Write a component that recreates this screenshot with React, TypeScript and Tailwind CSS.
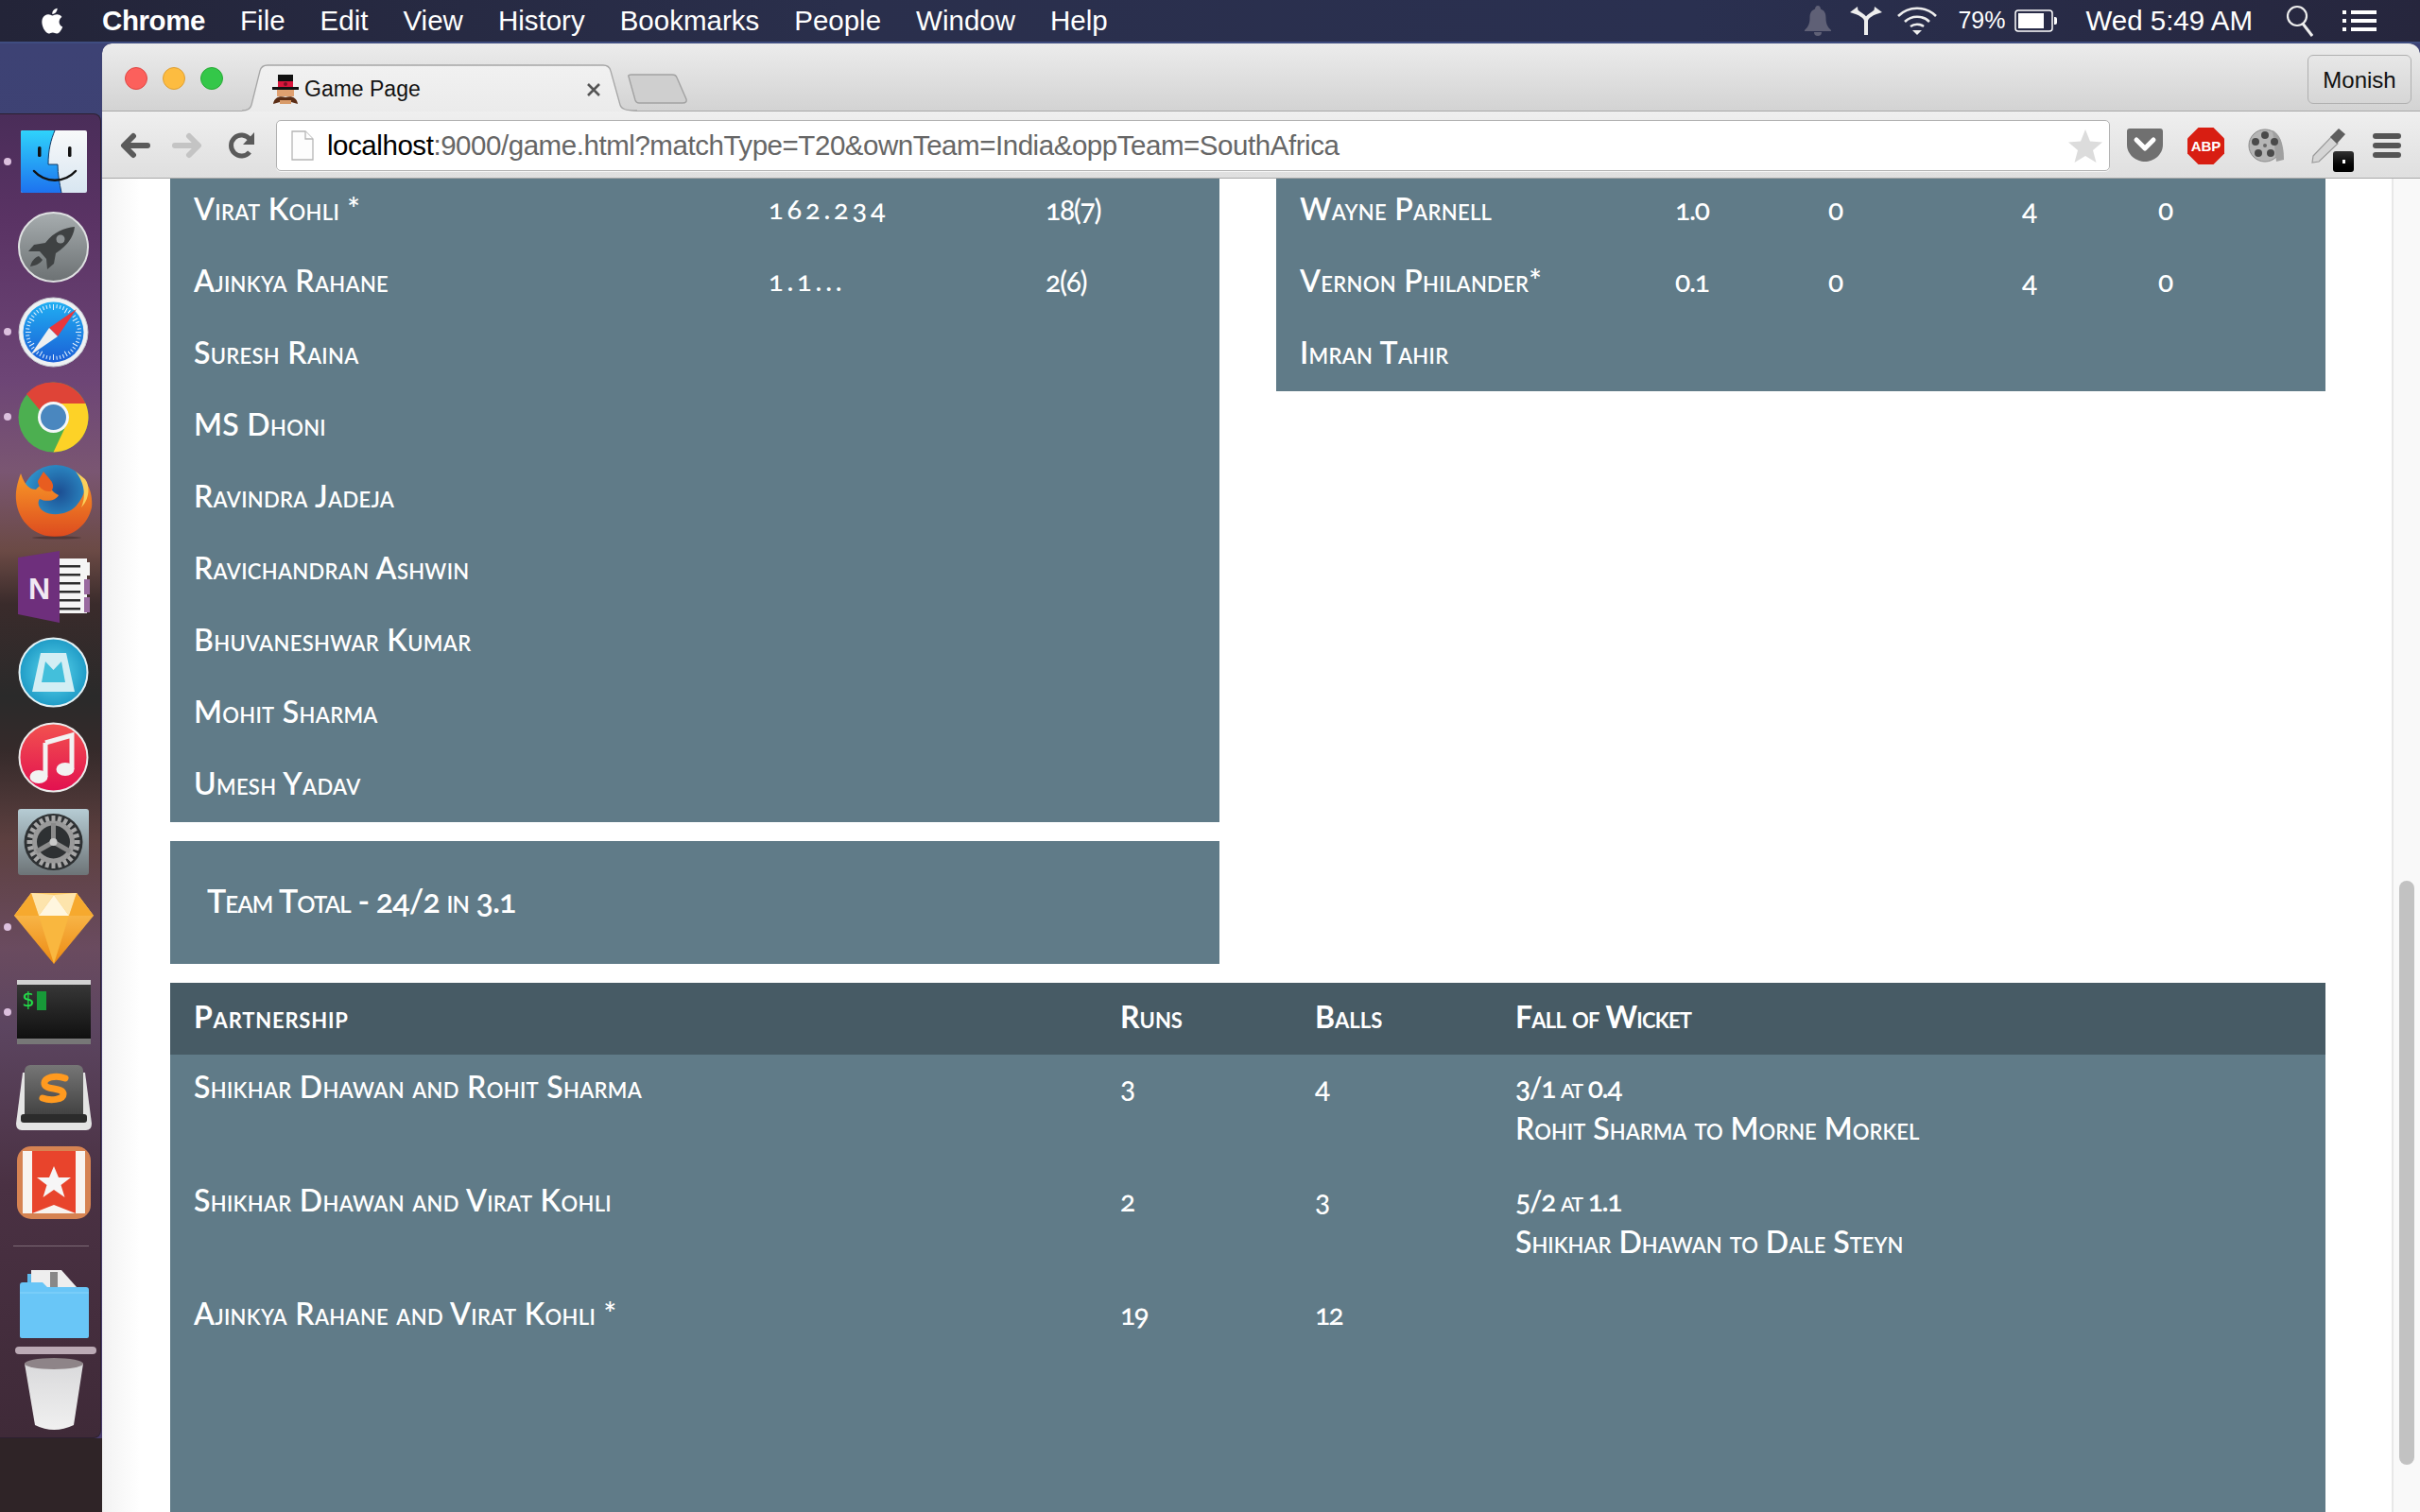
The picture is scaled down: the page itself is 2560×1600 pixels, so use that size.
import React from "react";

const Finder = () => (
  <svg width="70" height="66" viewBox="0 0 70 66">
    <defs>
      <linearGradient id="fa" x1="0" y1="0" x2="0" y2="1"><stop offset="0" stopColor="#2fd3fb" /><stop offset="1" stopColor="#1d72ef" /></linearGradient>
      <linearGradient id="fb" x1="0" y1="0" x2="0" y2="1"><stop offset="0" stopColor="#f8f9fa" /><stop offset="1" stopColor="#d8e6f1" /></linearGradient>
    </defs>
    <rect width="70" height="66" rx="2" fill="url(#fb)" />
    <path d="M2 0H36C32 10 29 20 29 36H39C39 46 41 56 43 66H2A2 2 0 0 1 0 64V2A2 2 0 0 1 2 0Z" fill="url(#fa)" />
    <path d="M36 0C32 10 29 20 29 36H39C39 46 41 56 43 66" fill="none" stroke="#123a66" strokeWidth="1" />
    <rect x="18" y="17" width="3.5" height="11" rx="1.5" fill="#111" />
    <rect x="50" y="17" width="3.5" height="11" rx="1.5" fill="#111" />
    <path d="M14 43C26 56 46 56 58 43" fill="none" stroke="#111" strokeWidth="2.5" strokeLinecap="round" />
  </svg>
);

const Launchpad = () => (
  <svg width="75" height="75" viewBox="0 0 75 75">
    <defs>
      <linearGradient id="la" x1="0" y1="0" x2="0" y2="1"><stop offset="0" stopColor="#a7adaf" /><stop offset="1" stopColor="#6c7173" /></linearGradient>
    </defs>
    <circle cx="37.5" cy="37.5" r="36.5" fill="url(#la)" stroke="#dfe1e2" strokeWidth="2" />
    <path d="M60 16C49 17 37 22 29 33L17 35 11 42 23 42 30 50 31 61 38 55 40 44C52 36 59 27 60 16Z" fill="#3f4243" />
    <path d="M22 47C17 49 14 53 13 58 19 57 23 55 26 51Z" fill="#3f4243" />
    <circle cx="45" cy="29" r="4.5" fill="#8d9294" />
  </svg>
);

const Safari = () => {
  const ticks = Array.from({ length: 48 }, (_, i) => i * 7.5);
  return (
    <svg width="75" height="75" viewBox="0 0 75 75">
      <defs>
        <linearGradient id="sa" x1="0" y1="0" x2="0" y2="1"><stop offset="0" stopColor="#20aef2" /><stop offset="1" stopColor="#1b5fd6" /></linearGradient>
      </defs>
      <circle cx="37.5" cy="37.5" r="36.5" fill="#eef1f3" stroke="#c5cad0" strokeWidth="1" />
      <circle cx="37.5" cy="37.5" r="32" fill="url(#sa)" />
      {ticks.map((a) => (
        <line key={a} x1="37.5" y1="8" x2="37.5" y2={a % 30 === 0 ? "14" : "12"} stroke="#e5f2fd" strokeWidth="1" transform={`rotate(${a} 37.5 37.5)`} />
      ))}
      <path d="M62 13L33 33 42 42Z" fill="#e8373c" />
      <path d="M13 62L33 33 42 42Z" fill="#eef0f1" />
    </svg>
  );
};

const Chrome = () => (
  <svg width="75" height="75" viewBox="0 0 75 75">
    <circle cx="37.5" cy="37.5" r="37" fill="#4caf50" />
    <path d="M37.5 .5A37 37 0 0 1 71.5 23H37.5A15 15 0 0 0 24 31L9 13A37 37 0 0 1 37.5 .5Z" fill="#df4437" />
    <path d="M71.5 23A37 37 0 0 1 37.5 74.5L51 46A15 15 0 0 0 37.5 23Z" fill="#fdd227" />
    <circle cx="37.5" cy="37.5" r="16.5" fill="#f4f7f9" />
    <circle cx="37.5" cy="37.5" r="13.5" fill="#4a87bf" />
  </svg>
);

const Firefox = () => (
  <svg width="82" height="80" viewBox="0 0 82 80">
    <defs>
      <radialGradient id="ffa" cx="55%" cy="40%" r="55%"><stop offset="0" stopColor="#1c4e92" /><stop offset="1" stopColor="#2f9ad2" /></radialGradient>
      <linearGradient id="ffb" x1="0" y1="0" x2="0" y2="1"><stop offset="0" stopColor="#f99a27" /><stop offset="1" stopColor="#dd4b1f" /></linearGradient>
    </defs>
    <circle cx="43" cy="37" r="36" fill="url(#ffa)" />
    <path d="M6 10C3 18 0 28 1 38 3 62 22 77 42 77 62 77 77 64 81 46 82 36 80 26 74 18 75 30 70 38 64 45 56 53 40 56 30 50 25 47 23 41 26 37 34 41 44 38 46 33 40 30 36 26 38 20 32 20 26 22 22 27 15 27 10 22 6 10Z" fill="url(#ffb)" />
    <path d="M64 8C72 18 76 32 70 46 78 38 80 24 74 16Z" fill="#fbd05a" />
    <path d="M30 8C36 16 44 21 38 29 30 30 24 24 24 18Z" fill="#e85d20" />
    <ellipse cx="44" cy="78" rx="26" ry="1.5" fill="#000" opacity=".25" />
  </svg>
);

const OneNote = () => (
  <svg width="76" height="76" viewBox="0 0 76 76">
    <rect x="40" y="8" width="33" height="58" fill="#f5f5f5" />
    <rect x="70" y="12" width="6" height="14" fill="#f5f5f5" />
    <rect x="70" y="30" width="6" height="16" fill="#9a6aa0" />
    <rect x="70" y="49" width="6" height="16" fill="#9a6aa0" />
    {[15, 24, 33, 42, 51, 60].map((y) => (
      <rect key={y} x="44" y={y} width="22" height="2.5" fill="#2d2d2d" />
    ))}
    <path d="M0 7L44 0V76L0 67Z" fill="#6e2f7c" />
    <text x="11" y="51" fontFamily="'Liberation Sans', sans-serif" fontWeight="700" fontSize="32" fill="#f1e8f3">N</text>
  </svg>
);

const Mailbox = () => (
  <svg width="75" height="75" viewBox="0 0 75 75">
    <defs>
      <radialGradient id="ma"><stop offset="0" stopColor="#5fd9ef" /><stop offset="1" stopColor="#1f9bc6" /></radialGradient>
    </defs>
    <circle cx="37.5" cy="37.5" r="36" fill="url(#ma)" stroke="#e4f2f6" strokeWidth="2" />
    <path d="M24 17H51L60 58H15Z" fill="#d3eef4" />
    <path d="M29 26L37.5 35 46 26 50 48H25Z" fill="#43bfdb" />
  </svg>
);

const Music = () => (
  <svg width="75" height="75" viewBox="0 0 75 75">
    <defs>
      <linearGradient id="ia" x1="0" y1="0" x2="0" y2="1"><stop offset="0" stopColor="#f2524f" /><stop offset="1" stopColor="#e21050" /></linearGradient>
    </defs>
    <circle cx="37.5" cy="37.5" r="36" fill="url(#ia)" stroke="#ececec" strokeWidth="2" />
    <path d="M29 22L57 14V50" fill="none" stroke="#f2f2f2" strokeWidth="5" />
    <path d="M29 22V58" fill="none" stroke="#f2f2f2" strokeWidth="5" />
    <ellipse cx="22" cy="58" rx="9.5" ry="7" fill="#f2f2f2" />
    <ellipse cx="50" cy="50" rx="9.5" ry="7" fill="#f2f2f2" />
  </svg>
);

const SysPrefs = () => {
  const teeth = Array.from({ length: 24 }, (_, i) => i * 15);
  return (
    <svg width="75" height="70" viewBox="0 0 75 70">
      <defs>
        <linearGradient id="pa" x1="0" y1="0" x2="0" y2="1"><stop offset="0" stopColor="#b6ccd4" /><stop offset="1" stopColor="#6d7477" /></linearGradient>
      </defs>
      <rect width="75" height="70" rx="3" fill="url(#pa)" />
      <ellipse cx="37.5" cy="35" rx="31" ry="30" fill="#2e3133" />
      {teeth.map((a) => (
        <rect key={a} x="35.5" y="7" width="4" height="6" fill="#a8a8a8" transform={`rotate(${a} 37.5 35)`} />
      ))}
      <circle cx="37.5" cy="35" r="20" fill="none" stroke="#9a9a9a" strokeWidth="5" />
      <path d="M37.5 35V15M37.5 35L20 45M37.5 35L55 45" stroke="#8b8b8b" strokeWidth="5" />
      <circle cx="37.5" cy="35" r="4" fill="#c9c9c9" />
    </svg>
  );
};

const Sketch = () => (
  <svg width="84" height="77" viewBox="0 0 84 77">
    <defs>
      <linearGradient id="ka" x1="0" y1="0" x2="0" y2="1"><stop offset="0" stopColor="#fdc85f" /><stop offset="1" stopColor="#ec8a12" /></linearGradient>
    </defs>
    <path d="M18 2H66L84 26 42 77 0 26Z" fill="url(#ka)" />
    <path d="M18 2H66L84 26H0Z" fill="#fbc868" />
    <path d="M26 26L42 4 58 26Z" fill="#fff6df" />
    <path d="M18 2L42 4 26 26ZM66 2L42 4 58 26Z" fill="#fde4ac" />
    <path d="M0 26L18 2 26 26ZM84 26L66 2 58 26Z" fill="#f6a92e" />
    <path d="M26 26H58L42 77Z" fill="#f9b73f" />
  </svg>
);

const Terminal = () => (
  <svg width="78" height="68" viewBox="0 0 78 68">
    <defs>
      <linearGradient id="ta" x1="0" y1="0" x2="0" y2="1"><stop offset="0" stopColor="#3a3a3a" /><stop offset="1" stopColor="#0c0c0c" /></linearGradient>
    </defs>
    <rect width="78" height="68" fill="url(#ta)" />
    <rect width="78" height="5" fill="#d2d2d2" />
    <rect y="62" width="78" height="6" fill="#777" />
    <text x="5" y="28" fontFamily="'DejaVu Sans Mono', monospace" fontSize="22" fill="#22e04a">$</text>
    <rect x="21" y="12" width="10" height="20" fill="#179a38" />
  </svg>
);

const Sublime = () => (
  <svg width="80" height="69" viewBox="0 0 80 69">
    <defs>
      <linearGradient id="ua" x1="0" y1="0" x2="0" y2="1"><stop offset="0" stopColor="#767676" /><stop offset="1" stopColor="#3a3a3a" /></linearGradient>
    </defs>
    <path d="M7 8L0 62Q0 69 6 69H74Q80 69 80 62L73 8Z" fill="#e4e4e4" />
    <rect x="9" y="0" width="62" height="61" rx="6" fill="url(#ua)" />
    <rect x="5" y="52" width="70" height="9" rx="3" fill="#2b2b2b" />
    <path d="M52 14C42 10 29 13 30 20 31 27 50 23 50 31 50 37 36 38 28 35" fill="none" stroke="#ff9a1f" strokeWidth="7" strokeLinecap="round" />
  </svg>
);

const Wunderlist = () => (
  <svg width="78" height="77" viewBox="0 0 78 77">
    <rect width="78" height="77" rx="15" fill="#d68352" />
    <rect x="6" y="5" width="66" height="66" fill="#f8f4f0" />
    <path d="M16 5H62V71L39 62 16 71Z" fill="#e8442c" />
    <path d="M39 21L44 33H57L46.5 41 50.5 54 39 46 27.5 54 31.5 41 21 33H34Z" fill="#f6f6f6" />
  </svg>
);

const Folder = () => (
  <svg width="73" height="72" viewBox="0 0 73 72">
    <path d="M12 0H44L60 18H12Z" fill="#eeeeee" />
    <rect x="32" y="2" width="8" height="18" fill="#888" />
    <path d="M8 4H12V13H8Z" fill="#5cb8ea" />
    <path d="M0 16Q0 13 3 13H24L29 18H70Q73 18 73 21V70Q73 72 71 72H2Q0 72 0 70Z" fill="#69c6f7" />
    <path d="M0 24H73" stroke="#8ad5fb" strokeWidth="1" />
  </svg>
);

const Trash = () => (
  <svg width="62" height="78" viewBox="0 0 62 78">
    <defs>
      <linearGradient id="ra" x1="0" y1="0" x2="0" y2="1"><stop offset="0" stopColor="#d8d8da" /><stop offset="1" stopColor="#f0f0f0" /></linearGradient>
    </defs>
    <path d="M0 7C10 1 52 1 62 7L52 72Q31 82 11 72Z" fill="url(#ra)" />
    <ellipse cx="31" cy="7" rx="31" ry="6" fill="#8e8488" />
  </svg>
);

const Dot = () => <span className="absolute left-[4px] top-1/2 -translate-y-1/2 w-[8px] h-[8px] rounded-full bg-[#dcc0de]" />;

const dockIcons: [React.ReactNode, boolean][] = [
  [<Finder />, true],
  [<Launchpad />, false],
  [<Safari />, true],
  [<Chrome />, true],
  [<Firefox />, false],
  [<OneNote />, false],
  [<Mailbox />, false],
  [<Music />, false],
  [<SysPrefs />, false],
  [<Sketch />, true],
  [<Terminal />, true],
  [<Sublime />, false],
  [<Wunderlist />, false],
];

const Dock = () => (
  <div className="w-[108px] h-full flex flex-col bg-gradient-to-b from-[#3d4274] to-[#4a3c6c]">
    <div className="h-[74px] shrink-0" />
    <div className="w-[107px] h-[1402px] shrink-0 rounded-tr-[8px] rounded-br-[8px] border-r border-t border-b border-[#2c2030] flex flex-col items-stretch pt-[5px] bg-[linear-gradient(180deg,#4a2d59_0%,#5a3364_8%,#6d4576_20%,#7a5672_27%,#6b4a45_33%,#3a2b2b_37%,#2a2a2a_44%,#352a2a_48%,#5d4040_55%,#6a4b5f_63%,#5c4560_69%,#4a3143_81%,#3f2a38_100%)]">
      {dockIcons.map(([icon, running], i) => (
        <div key={i} className="relative h-[90px] shrink-0 flex items-center justify-center pl-[7px]">
          {running && <Dot />}
          {icon}
        </div>
      ))}
      <div className="mt-[22px] ml-[14px] w-[80px] h-px bg-[#7d6a76]" />
      <div className="mt-[25px] ml-[21px] h-[72px]">
        <Folder />
      </div>
      <div className="mt-[9px] ml-[16px] w-[86px] h-[8px] rounded-full bg-[#bbaab5]" />
      <div className="mt-[3px] ml-[26px] h-[78px]">
        <Trash />
      </div>
    </div>
    <div className="flex-1 bg-[#2f2427]" />
  </div>
);

const Apple = () => (
  <svg width="26" height="32" viewBox="0 0 26 32" fill="#fff">
    <path d="M21.6 17C21.6 13.6 24.4 12 24.5 11.9 22.9 9.6 20.5 9.3 19.6 9.2 17.5 9 15.6 10.4 14.5 10.4 13.4 10.4 11.7 9.2 10 9.3 7.7 9.3 5.6 10.6 4.5 12.6 2.1 16.7 3.9 22.8 6.2 26.1 7.3 27.7 8.7 29.5 10.4 29.5 12.1 29.4 12.7 28.4 14.8 28.4 16.8 28.4 17.4 29.5 19.2 29.4 21 29.4 22.2 27.8 23.3 26.2 24.6 24.3 25.2 22.5 25.2 22.4 25.1 22.4 21.6 21 21.6 17Z" />
    <path d="M18.2 7C19.1 5.9 19.8 4.3 19.6 2.8 18.2 2.9 16.6 3.7 15.7 4.8 14.8 5.8 14.1 7.4 14.3 8.9 15.8 9 17.3 8.1 18.2 7Z" />
  </svg>
);

const MenuBar = () => (
  <div className="h-[46px] shrink-0 flex items-center text-white font-['Liberation_Sans',Arial,sans-serif] text-[29.5px] bg-[linear-gradient(90deg,#232438_0%,#2a2f4c_35%,#2a3050_70%,#26263d_100%)] border-b-2 border-[#3f4d80]">
    <div className="ml-[41px] w-[67px]">
      <Apple />
    </div>
    <div className="flex items-center gap-[37px]">
      <span className="font-bold tracking-[-0.4px]">Chrome</span>
      <span>File</span>
      <span>Edit</span>
      <span>View</span>
      <span>History</span>
      <span>Bookmarks</span>
      <span>People</span>
      <span>Window</span>
      <span>Help</span>
    </div>
    <div className="ml-auto flex items-center">
      <svg width="28" height="32" viewBox="0 0 28 32" fill="#5f6076">
        <path d="M14 0C16 0 17 2 17 3.5 21 5 22.5 8 22.5 13 22.5 20 25 23 28 26V27H0V26C3 23 5.5 20 5.5 13 5.5 8 7 5 11 3.5 11 2 12 0 14 0Z" />
        <path d="M10 28H18A4 4 0 0 1 10 28Z" />
      </svg>
      <svg className="ml-[20px]" width="34" height="30" viewBox="0 0 34 30" fill="none" stroke="#eee" strokeWidth="4">
        <path d="M17 30V15C17 10 11 9 7 5M17 15C17 10 23 9 27 5" />
        <path d="M0 6L8 0 9 9ZM34 6L26 0 25 9Z" fill="#eee" stroke="none" />
      </svg>
      <svg className="ml-[16px]" width="42" height="30" viewBox="0 0 42 30" fill="none" stroke="#eee" strokeWidth="2.6">
        <path d="M1 10C12 -1 30 -1 41 10M8 16C15 9 27 9 34 16M14 21C18 18 24 18 28 21" />
        <path d="M21 30L16 25H26Z" fill="#eee" stroke="none" />
      </svg>
      <span className="ml-[22px] text-[25px]">79%</span>
      <svg className="ml-[10px]" width="46" height="24" viewBox="0 0 46 24">
        <rect x="1" y="1" width="39" height="22" rx="3" fill="none" stroke="#fff" strokeWidth="1.5" />
        <rect x="4" y="4" width="27" height="16" fill="#fff" />
        <path d="M42 8H43Q45 8 45 10V14Q45 16 43 16H42Z" fill="#fff" />
      </svg>
      <span className="ml-[29px]">Wed 5:49 AM</span>
      <svg className="ml-[35px]" width="29" height="34" viewBox="0 0 29 34" fill="none" stroke="#eee" strokeWidth="2.2">
        <circle cx="12" cy="12" r="10" />
        <path d="M18 20L28 33" strokeWidth="3" />
      </svg>
      <svg className="ml-[31px] mr-[46px]" width="36" height="22" viewBox="0 0 36 22" fill="#fff">
        <rect width="4" height="4" />
        <rect x="9" width="27" height="4" />
        <rect y="9" width="4" height="4" />
        <rect x="9" y="9" width="27" height="4" />
        <rect y="18" width="4" height="4" />
        <rect x="9" y="18" width="27" height="4" />
      </svg>
    </div>
  </div>
);

const Light = ({ c, b }: { c: string; b: string }) => (
  <span className="w-[24px] h-[24px] rounded-full border" style={{ backgroundColor: c, borderColor: b }} />
);

const Favicon = () => (
  <svg width="28" height="32" viewBox="0 0 28 32">
    <path d="M6 1H22V13H6Z" fill="#111" />
    <rect x="6" y="8" width="16" height="6" fill="#d8153b" />
    <circle cx="14" cy="11" r="2" fill="#7a0e22" />
    <rect x="0" y="14" width="28" height="3" fill="#111" />
    <rect x="5" y="17" width="18" height="7" fill="#e0a070" />
    <path d="M1 32C2 25 8 23 14 25 20 23 26 25 27 32L20 30 14 28 8 30Z" fill="#5a2c14" />
    <rect x="8" y="28" width="12" height="4" fill="#d89a68" />
  </svg>
);

const TabBar = () => (
  <div className="h-[72px] shrink-0 flex bg-gradient-to-b from-[#ececec] to-[#d3d3d3] border-b border-[#a9a9a9] rounded-tr-[12px] rounded-tl-[10px]">
    <div className="w-[148px] flex items-center gap-[16px] pl-[24px] pt-[3px]">
      <Light c="#fc605c" b="#df4744" />
      <Light c="#fdbc40" b="#de9f34" />
      <Light c="#34c749" b="#27aa35" />
    </div>
    <div className="relative w-[418px] h-[50px] mt-[22px] shrink-0 flex items-center pl-[32px] pt-[2px]">
      <svg className="absolute inset-0" width="418" height="50" viewBox="0 0 418 50" fill="none">
        <defs>
          <linearGradient id="tabg" x1="0" y1="0" x2="0" y2="1">
            <stop offset="0" stopColor="#f1f1f1" />
            <stop offset="1" stopColor="#ebebeb" />
          </linearGradient>
        </defs>
        <path d="M0 49C6 49 9 47 10 43L19 7C20 3 23 1 27 1H382C386 1 389 3 390 7L400 43C401 47 405 49 418 50H0Z" fill="url(#tabg)" />
        <path d="M0 49C6 49 9 47 10 43L19 7C20 3 23 1 27 1H382C386 1 389 3 390 7L400 43C401 47 405 49 418 49" stroke="#a6a6a6" strokeWidth="1.3" />
      </svg>
      <span className="relative flex items-center font-['Liberation_Sans',Arial,sans-serif] text-[23px] text-[#111]">
        <Favicon />
        <span className="ml-[6px]">Game Page</span>
      </span>
      <svg className="absolute left-[365px] top-[20px]" width="14" height="14" viewBox="0 0 14 14" stroke="#555" strokeWidth="2.6">
        <path d="M1 1L13 13M13 1L1 13" />
      </svg>
    </div>
    <div className="mt-[32px] ml-[-10px] w-[64px] h-[32px] shrink-0">
      <svg width="64" height="32" viewBox="0 0 64 32">
        <path d="M1 3Q0 1 4 1H47Q51 1 52 4L62 27Q63 31 58 31H12Q9 31 8 28Z" fill="#cfcfcf" stroke="#a2a2a2" strokeWidth="1.4" />
      </svg>
    </div>
    <div className="ml-auto mr-[9px] mt-[12px] w-[110px] h-[52px] rounded-[6px] border border-[#b0b0b0] flex items-center justify-center pt-[2px] font-['Liberation_Sans',Arial,sans-serif] text-[24px] text-[#111]">
      Monish
    </div>
  </div>
);

const Toolbar = () => (
  <div className="h-[71px] shrink-0 flex items-center pt-[2px] bg-gradient-to-b from-[#efefef] to-[#dfdfdf] border-b border-[#a8a8a8]">
    <svg className="ml-[19px]" width="32" height="28" viewBox="0 0 32 28" fill="none" stroke="#5a5a5a" strokeWidth="6" strokeLinecap="round" strokeLinejoin="round">
      <path d="M29 14H5M14 4L4 14 14 24" />
    </svg>
    <svg className="ml-[23px]" width="32" height="28" viewBox="0 0 32 28" fill="none" stroke="#c4c4c4" strokeWidth="6" strokeLinecap="round" strokeLinejoin="round">
      <path d="M3 14H27M18 4L28 14 18 24" />
    </svg>
    <svg className="ml-[27px]" width="30" height="30" viewBox="0 0 30 30" fill="none" stroke="#5a5a5a" strokeWidth="5">
      <path d="M23 22A11 11 0 1 1 23 8" />
      <path d="M28 1V14H16Z" fill="#5a5a5a" stroke="none" />
    </svg>
    <div className="ml-[21px] w-[1940px] h-[54px] rounded-[5px] border border-[#b2b2b2] bg-white flex items-center pl-[15px] shadow-[0_1px_0_#f5f5f5]">
      <svg width="24" height="32" viewBox="0 0 24 32" fill="#fdfdfd" stroke="#b5b5b5" strokeWidth="1.3">
        <path d="M1 1H15L23 9V31H1Z" />
        <path d="M15 1V9H23" />
      </svg>
      <span className="ml-[14px] font-['Liberation_Sans',Arial,sans-serif] text-[29.5px] tracking-[-0.45px] text-[#666]">
        <span className="text-black">localhost</span>:9000/game.html?matchType=T20&amp;ownTeam=India&amp;oppTeam=SouthAfrica
      </span>
      <svg className="ml-auto mr-[7px]" width="36" height="35" viewBox="0 0 36 35" fill="#dcdcdc">
        <path d="M18 0L23 12.5 36 13.5 26 22 29.5 35 18 28 6.5 35 10 22 0 13.5 13 12.5Z" />
      </svg>
    </div>
    <svg className="ml-[18px]" width="38" height="36" viewBox="0 0 38 36">
      <path d="M0 3Q0 0 3 0H35Q38 0 38 3V17C38 28 28 35 19 35 10 35 0 28 0 17Z" fill="#707070" />
      <path d="M10 12L19 21 28 12" fill="none" stroke="#fff" strokeWidth="5" strokeLinecap="round" strokeLinejoin="round" />
    </svg>
    <svg className="ml-[26px]" width="39" height="39" viewBox="0 0 39 39">
      <path d="M11.5 0H27.5L39 11.5V27.5L27.5 39H11.5L0 27.5V11.5Z" fill="#d81e12" />
      <text x="19.5" y="25" textAnchor="middle" fontFamily="'Liberation Sans Narrow', 'Liberation Sans', sans-serif" fontWeight="700" fontSize="15" fill="#fff">ABP</text>
    </svg>
    <svg className="ml-[25px]" width="38" height="38" viewBox="0 0 38 38">
      <circle cx="18" cy="19" r="17" fill="#b5b5b5" stroke="#8a8a8a" />
      <path d="M26 3C32 6 38 14 38 34L30 36Z" fill="#a0a0a0" />
      {[[18, 8], [8, 15], [11, 27], [24, 27], [28, 15]].map(([x, y]) => (
        <circle key={x} cx={x} cy={y} r="4" fill="#4a4a4a" />
      ))}
      <circle cx="18" cy="19" r="2" fill="#666" />
    </svg>
    <div className="relative ml-[28px] w-[38px] h-[38px]">
      <svg width="38" height="38" viewBox="0 0 38 38">
        <path d="M3 30L22 10 29 17 9 36 2 37Z" fill="#d5d5d5" stroke="#9a9a9a" strokeWidth="1.2" />
        <path d="M21 10L30 1 37 7 28 17Z" fill="#5e5e5e" />
      </svg>
      <span className="absolute left-[24px] top-[25px] w-[22px] h-[22px] rounded-[3px] bg-gradient-to-b from-[#333] to-black flex items-center justify-center">
        <span className="w-[3px] h-[4px] bg-white" />
      </span>
    </div>
    <div className="ml-[28px] w-[30px] flex flex-col gap-[4px]">
      <span className="h-[6px] rounded-[3px] bg-[#555]" />
      <span className="h-[6px] rounded-[3px] bg-[#555]" />
      <span className="h-[6px] rounded-[3px] bg-[#555]" />
    </div>
  </div>
);

const Batting = [
  ["Virat Kohli *", "162.234", "18(7)"],
  ["Ajinkya Rahane", "1.1...", "2(6)"],
  ["Suresh Raina", "", ""],
  ["MS Dhoni", "", ""],
  ["Ravindra Jadeja", "", ""],
  ["Ravichandran Ashwin", "", ""],
  ["Bhuvaneshwar Kumar", "", ""],
  ["Mohit Sharma", "", ""],
  ["Umesh Yadav", "", ""],
];

const Bowling = [
  ["Wayne Parnell", "1.0", "0", "4", "0"],
  ["Vernon Philander*", "0.1", "0", "4", "0"],
  ["Imran Tahir", "", "", "", ""],
];

const Partners = [
  ["Shikhar Dhawan and Rohit Sharma", "3", "4", "3/1 at 0.4", "Rohit Sharma to Morne Morkel"],
  ["Shikhar Dhawan and Virat Kohli", "2", "3", "5/2 at 1.1", "Shikhar Dhawan to Dale Steyn"],
  ["Ajinkya Rahane and Virat Kohli *", "19", "12", "", ""],
];

const Content = () => (
  <div className="relative flex-1 min-h-0 overflow-hidden bg-[linear-gradient(90deg,#f2f2f2,#ffffff_40px)] font-['Lato',sans-serif] font-semibold text-[32px] [font-variant-caps:small-caps] [font-variant-numeric:oldstyle-nums] tracking-[0.3px] text-white">
    <div className="w-[2530px] -mt-[3px] pl-[72px]">
      <div className="flex gap-[60px] w-[2280px] items-start">
        <div className="w-[1110px] shrink-0">
          <div className="bg-[#607b88]">
            {Batting.map(([n, sr, r]) => (
              <div key={n} className="h-[76px] pl-[25px] pb-[6px] grid grid-cols-[608px_293px_1fr] items-center">
                <span>{n}</span>
                <span className="tracking-[3.8px] text-[29px] font-medium">{sr}</span>
                <span className="text-[30px] tracking-[-1.3px] font-medium">{r}</span>
              </div>
            ))}
          </div>
          <div className="mt-[20px] h-[130px] bg-[#607b88] flex items-center pl-[39px] pb-[5px] text-[34px] tracking-[-0.9px]">
            Team Total - 24/2 in 3.1
          </div>
        </div>
        <div className="w-[1110px] shrink-0 bg-[#607b88]">
          {Bowling.map(([n, o, m, r, w]) => (
            <div key={n} className="h-[76px] pl-[25px] pb-[6px] grid grid-cols-[397px_162px_205px_144px_1fr] items-center">
              <span>{n}</span>
              <span className="text-[30px] tracking-[-1.3px] font-medium">{o}</span>
              <span className="text-[30px] tracking-[-1.3px] font-medium">{m}</span>
              <span className="text-[30px] tracking-[-1.3px] font-medium">{r}</span>
              <span className="text-[30px] tracking-[-1.3px] font-medium">{w}</span>
            </div>
          ))}
        </div>
      </div>
      <div className="mt-[20px] w-[2280px] h-[600px] bg-[#607b88]">
        <div className="h-[76px] pl-[25px] pb-[5px] bg-[#475b65] grid grid-cols-[980px_206px_212px_1fr] items-center font-bold tracking-[0px]">
          <span className="tracking-[0.8px]">Partnership</span>
          <span>Runs</span>
          <span>Balls</span>
          <span className="tracking-[-0.8px]">Fall of Wicket</span>
        </div>
        {Partners.map(([n, a, b, c, d]) => (
          <div key={n} className="h-[120px] pl-[25px] pt-[12px] grid grid-cols-[980px_206px_212px_1fr] items-start leading-[44px]">
            <span>{n}</span>
            <span className="text-[30px] tracking-[-1.6px] font-medium">{a}</span>
            <span className="text-[30px] tracking-[-1.6px] font-medium">{b}</span>
            <span className="tracking-[0px]">
              <span className="text-[30px] tracking-[-1.4px]">{c}</span>
              <br />
              {d}
            </span>
          </div>
        ))}
      </div>
    </div>
    <div className="absolute right-0 top-0 bottom-0 w-[30px] bg-[#f9f9f9] border-l-2 border-[#e8e8e8] pl-[6px]">
      <div className="mt-[743px] w-[16px] h-[618px] rounded-full bg-[#c2c2c2]" />
    </div>
  </div>
);

export default function App() {
  return (
    <div className="w-[2560px] h-[1600px] overflow-hidden flex flex-col bg-[#3d4274]">
      <MenuBar />
      <div className="flex-1 min-h-0 flex">
        <Dock />
        <div className="flex-1 min-w-0 flex flex-col rounded-t-[10px] overflow-hidden">
          <TabBar />
          <Toolbar />
          <Content />
        </div>
      </div>
    </div>
  );
}
